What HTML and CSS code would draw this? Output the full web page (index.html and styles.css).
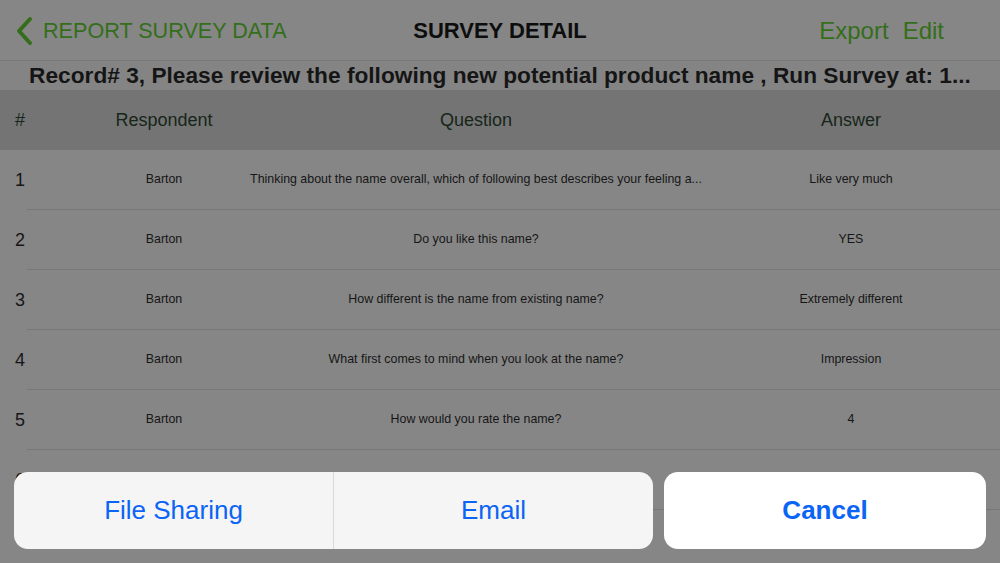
FILE: index.html
```html
<!DOCTYPE html>
<html lang="en">

<head>
    <meta charset="UTF-8">
    <meta name="viewport" content="width=device-width, initial-scale=1.0">
    <title>Survey Detail</title>
    <link rel="stylesheet" href="styles.css">
</head>

<body>
    <div class="screen">
        <div class="nav">
            <a class="back">
                <svg width="20" height="30" viewBox="0 0 20 30">
                    <path d="M16 3 L5 15 L16 27" fill="none" stroke="#346e1a" stroke-width="4" stroke-linecap="round"
                        stroke-linejoin="round" />
                </svg>
                <span>REPORT SURVEY DATA</span>
            </a>
            <div class="title">SURVEY DETAIL</div>
            <div class="actions">
                <span>Export</span>
                <span>Edit</span>
            </div>
        </div>
        <div class="record">Record# 3, Please review the following new potential product name , Run Survey at: 1...</div>
        <div class="thead">
            <div class="c-num">#</div>
            <div>Respondent</div>
            <div>Question</div>
            <div>Answer</div>
        </div>
        <div class="rows">
            <div class="row">
                <div class="c-num">1</div>
                <div class="cell">Barton</div>
                <div class="cell">Thinking about the name overall, which of following best describes your feeling a...</div>
                <div class="cell">Like very much</div>
            </div>
            <div class="row">
                <div class="c-num">2</div>
                <div class="cell">Barton</div>
                <div class="cell">Do you like this name?</div>
                <div class="cell">YES</div>
            </div>
            <div class="row">
                <div class="c-num">3</div>
                <div class="cell">Barton</div>
                <div class="cell">How different is the name from existing name?</div>
                <div class="cell">Extremely different</div>
            </div>
            <div class="row">
                <div class="c-num">4</div>
                <div class="cell">Barton</div>
                <div class="cell">What first comes to mind when you look at the name?</div>
                <div class="cell">Impression</div>
            </div>
            <div class="row">
                <div class="c-num">5</div>
                <div class="cell">Barton</div>
                <div class="cell">How would you rate the name?</div>
                <div class="cell">4</div>
            </div>
            <div class="row">
                <div class="c-num">6</div>
                <div class="cell">Barton</div>
                <div class="cell">Which name do you prefer?</div>
                <div class="cell">This one</div>
            </div>
        </div>

        <!-- action sheet over the dimmed table -->
        <div class="sheet">
            <div class="group">
                <div class="btn">File Sharing</div>
                <div class="btn">Email</div>
            </div>
            <div class="btn cancel">Cancel</div>
        </div>
    </div>
</body>

</html>
```

FILE: styles.css
```css
* {
    box-sizing: border-box;
}

body {
    margin: 0;
    font-family: "Liberation Sans", Arial, sans-serif;
    background: #868686;
}

.screen {
    position: relative;
    width: 1000px;
    height: 563px;
    overflow: hidden;
    background: #868686;
}

.nav {
    display: grid;
    grid-template-columns: 1fr auto 1fr;
    align-items: center;
    height: 61px;
    padding: 2px 14px 0;
    border-bottom: 1px solid #787878;
}

.back {
    display: flex;
    align-items: center;
    gap: 9px;
    color: #346e1a;
    font-size: 21.6px;
}

.title {
    font-size: 22px;
    font-weight: bold;
    color: #0d0d0d;
}

.actions {
    display: flex;
    justify-content: flex-end;
    gap: 14px;
    padding-right: 42px;
    color: #346e1a;
    font-size: 24px;
}

.record {
    height: 29px;
    line-height: 29px;
    text-align: center;
    font-size: 22.7px;
    font-weight: bold;
    color: #151515;
    white-space: nowrap;
    overflow: hidden;
    background: #848484;
}

.thead,
.row {
    display: grid;
    grid-template-columns: 78px 172px 452px 1fr;
    align-items: center;
    text-align: center;
}

.thead {
    height: 60px;
    background: #747474;
    font-size: 18px;
    color: #16261a;
}

.c-num {
    text-align: left;
    padding-left: 15px;
}

.row {
    position: relative;
    height: 60px;
    font-size: 12.4px;
    color: #161616;
}

.row::after {
    content: "";
    position: absolute;
    left: 27px;
    right: 0;
    bottom: 0;
    height: 1px;
    background: #777777;
}

.row .c-num {
    font-size: 18px;
}

.cell {
    white-space: nowrap;
    margin-bottom: 3px;
}

.sheet {
    position: absolute;
    left: 14px;
    right: 14px;
    top: 472px;
    display: flex;
    gap: 11px;
}

.group {
    flex: 0 0 639px;
    display: flex;
    background: #f5f5f5;
    border-radius: 14px;
    overflow: hidden;
}

.group .btn {
    flex: 1;
}

.group .btn + .btn {
    border-left: 1px solid #d9d9d9;
}

.btn {
    height: 77px;
    display: flex;
    align-items: center;
    justify-content: center;
    font-size: 26px;
    color: #0a64f5;
}

.cancel {
    flex: 1;
    background: #ffffff;
    border-radius: 14px;
    font-weight: bold;
}
```
